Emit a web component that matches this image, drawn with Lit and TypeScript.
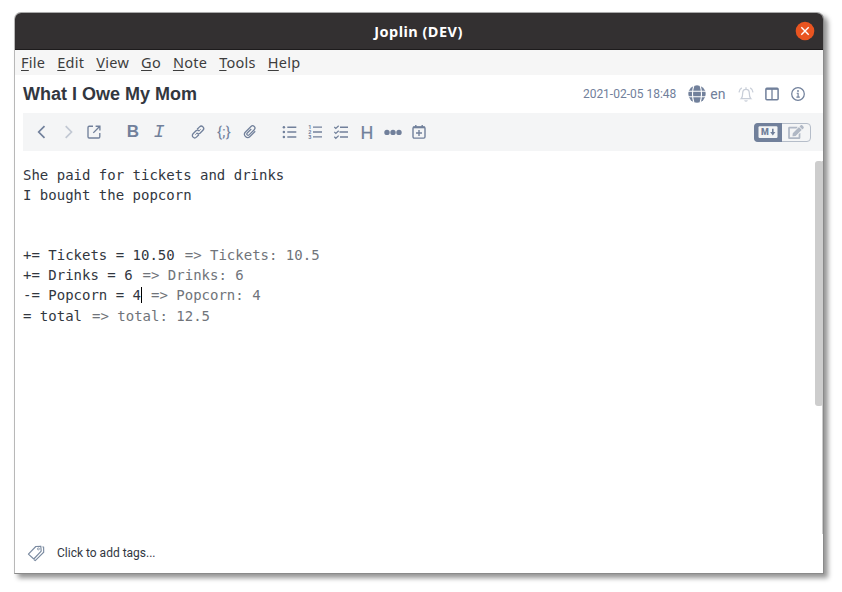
import { LitElement, html, svg, css } from "lit";
import { customElement } from "lit/decorators.js";

const icon = (w: number, h: number, body: unknown) =>
  html`<svg width=${w} height=${h} viewBox="0 0 ${w} ${h}" fill="none" stroke="currentColor" stroke-width="1.5">${body}</svg>`;

const icons = {
  close: icon(18, 18, svg`<circle cx="9" cy="9" r="9.3" fill="#e95420" stroke="none"/><path d="M5.3 5.3l7.4 7.4M12.7 5.3l-7.4 7.4" stroke="#fff" stroke-width="1.4"/>`),
  globe: icon(18, 18, svg`<circle cx="9" cy="9" r="8.7" fill="currentColor" stroke="none"/><path d="M0 6.3h18M0 11.7h18M6 0q-3 9 0 18M12 0q3 9 0 18" stroke="#fff" stroke-width="1.1"/>`),
  bell: icon(16, 16, svg`<path d="M3.2 12.6c1.1-1 1.5-2.5 1.5-5.5 0-2.2 1.2-3.8 3.3-3.8s3.3 1.6 3.3 3.8c0 3 .4 4.5 1.5 5.5zM8 1.2v2M6.6 14.3q1.4 1.7 2.8 0M3.8 1.9Q1.3 3.3 1 6.4M12.2 1.9q2.5 1.4 2.8 4.5" stroke-width="1.25"/>`),
  columns: icon(14, 14, svg`<rect x=".9" y="1.3" width="12.2" height="11.4" rx="1"/><path d="M1 1.9h12" stroke-width="1.9"/><path d="M7 2v10.5" stroke-width="1.3"/>`),
  info: icon(14, 14, svg`<circle cx="7" cy="7" r="6.3" stroke-width="1.25"/><path d="M5.7 6.2H7.1V10M5.4 10.1h3.4" stroke-width="1.15"/><circle cx="7" cy="4" r=".9" fill="currentColor" stroke="none"/>`),
  back: icon(14, 14, svg`<path d="M9.5 1.2L3.7 7l5.8 5.8" stroke-width="1.7"/>`),
  forward: icon(14, 14, svg`<path d="M4.7 1.2L10.5 7l-5.8 5.8" stroke-width="1.7"/>`),
  external: icon(14, 14, svg`<path d="M6 1.2H2.2Q1 1.2 1 2.4v9.4Q1 13 2.2 13h9.4q1.2 0 1.2-1.2V8M8.6 1.2h4.3v4.3M12.8 1.3L6.3 7.9" stroke-width="1.35"/>`),
  link: icon(14, 14, svg`<g transform="rotate(-45 7 7)" stroke-width="1.3"><path d="M5.7 9.5H2.3a2.4 2.4 0 0 1 0-4.8h4.2a2.3 2.3 0 0 1 2.2 2.7M8.3 4.5h3.4a2.4 2.4 0 0 1 0 4.8H7.5a2.3 2.3 0 0 1-2.2-2.7"/><path d="M3 7.1h3M8 6.9h3" stroke-width=".8"/></g>`),
  clip: icon(14, 14, svg`<g transform="rotate(45 7 7)" stroke-width="1.25"><path d="M10.2 2.8v7.4a3.2 3.2 0 0 1-6.4 0V2.4a2.3 2.3 0 0 1 4.6 0v7.3a1.3 1.3 0 0 1-2.6 0V4"/></g>`),
  bullets: icon(14, 14, svg`<g fill="currentColor" stroke="none"><circle cx="1.9" cy="2.2" r="1.25"/><circle cx="1.9" cy="7" r="1.25"/><circle cx="1.9" cy="11.9" r="1.25"/></g><path d="M5.3 2.2h9M5.3 7h9M5.3 11.9h9"/>`),
  numbers: icon(14, 14, svg`<path d="M5 2.2h9M5 7h9M5 11.9h9" stroke-width="1.3"/><g fill="currentColor" stroke="none" font-family="Roboto, sans-serif" font-weight="700" font-size="5.5"><text x=".2" y="4">1</text><text x=".2" y="9">2</text><text x=".2" y="14">3</text></g>`),
  checks: icon(14, 14, svg`<path d="M6 2.2h8M5.5 7H14M6 11.9h8"/><path d="M.3 2l1.5 1.5L4.7.8M.3 6.9l1.5 1.5 2.9-2.7M.3 11.8l1.5 1.5 2.9-2.7" stroke-width="1.25"/>`),
  dots: icon(18, 14, svg`<g fill="currentColor" stroke="none"><circle cx="3" cy="7.4" r="2.7"/><circle cx="9" cy="7.4" r="2.7"/><circle cx="15" cy="7.4" r="2.7"/></g>`),
  calendar: icon(14, 14, svg`<rect x="1" y="1.9" width="12" height="11.2" rx="1.3" stroke-width="1.4"/><path d="M1 2.4h12" stroke-width="1.8"/><path d="M3.8 0v2.5M10.2 0v2.5M7 5v6M4 8h6" stroke-width="1.4"/>`),
  tags: icon(18, 18, svg`<path d="M1.4 10.1L8.8 2.5l5-.3.4 4.9L6.8 15z" stroke-width="1.15" stroke-linejoin="round"/><path d="M15.5 2.8l1.1.3.1 5.1-8.4 8.4-1.3-.8" stroke-width="1.15"/><circle cx="11.4" cy="4.9" r="1" stroke-width=".8"/>`),
  markdown: icon(20, 12, svg`<rect x=".5" y=".2" width="19" height="11.8" rx="1.2" fill="#f4f5f6" stroke="none"/><text x="2.9" y="9" font-family="Roboto, sans-serif" font-weight="900" font-size="8.2" textLength="7.8" lengthAdjust="spacingAndGlyphs" fill="currentColor" stroke="none">M</text><path d="M14.8 2.8v4" stroke-width="1.6"/><path d="M12.2 6.1h5.2l-2.6 3.3z" fill="currentColor" stroke="none"/>`),
};

const editIcon = html`<svg width="16" height="14" viewBox="0 0 576 512" fill="currentColor"><path d="M402.6 83.2l90.2 90.2c3.8 3.8 3.8 10 0 13.8L274.4 405.6l-92.8 10.3c-12.4 1.4-22.9-9.1-21.5-21.5l10.3-92.8L388.8 83.2c3.8-3.8 10-3.8 13.8 0zm162-22.9l-48.8-48.8c-15.2-15.2-39.9-15.2-55.2 0l-35.4 35.4c-3.8 3.8-3.8 10 0 13.8l90.2 90.2c3.8 3.8 10 3.8 13.8 0l35.4-35.4c15.2-15.3 15.2-40 0-55.2zM384 346.2V448H64V128h229.8c3.2 0 6.2-1.3 8.5-3.5l40-40c7.6-7.6 2.2-20.5-8.5-20.5H48C21.5 64 0 85.5 0 112v352c0 26.5 21.5 48 48 48h352c26.5 0 48-21.5 48-48V306.2c0-10.7-12.9-16-20.5-8.5l-40 40c-2.2 2.3-3.5 5.3-3.5 8.5z"/></svg>`;

const menu = ["File", "Edit", "View", "Go", "Note", "Tools", "Help"];

const toolGroups = [
  [icons.back, html`<span class="dim">${icons.forward}</span>`, icons.external],
  [html`<b class="bold">B</b>`, html`<i class="italic">I</i>`],
  [icons.link, html`<span class="code">{;}</span>`, icons.clip],
  [icons.bullets, icons.numbers, icons.checks, html`<span class="heading">H</span>`, icons.dots, icons.calendar],
];

const lines: { text: string; result?: string; caret?: boolean }[] = [
  { text: "She paid for tickets and drinks" },
  { text: "I bought the popcorn" },
  { text: "" },
  { text: "" },
  { text: "+= Tickets = 10.50", result: "=> Tickets: 10.5" },
  { text: "+= Drinks = 6", result: "=> Drinks: 6" },
  { text: "-= Popcorn = 4", result: "=> Popcorn: 4", caret: true },
  { text: "= total", result: "=> total: 12.5" },
];

@customElement("app-root")
export class AppRoot extends LitElement {
  static styles = css`
    :host { display: block; box-sizing: border-box; width: 842px; height: 592px; padding: 12px 18px 18px 14px; background: #fff; overflow: hidden; }
    * { box-sizing: border-box; }
    svg { display: block; flex: none; overflow: visible; }
    .window { height: 562px; display: flex; flex-direction: column; border: 1px solid #8a8a8a; border-left-color: #b8b8b8; border-top-color: #aaa; border-radius: 7px 7px 0 0; background: #fff; box-shadow: 4px 4px 5px rgba(0,0,0,.42); }
    .titlebar { height: 37px; flex: none; display: grid; grid-template-columns: 1fr auto 1fr; align-items: center; background: #333031; border-bottom: 1px solid #1d1b1c; border-radius: 6px 6px 0 0; color: #fff; font: 700 14.5px "Noto Sans", sans-serif; padding-right: 9px; }
    .caption { grid-column: 2; letter-spacing: .48px; padding-left: 8px; }
    .close { justify-self: end; }
    .menu { height: 25px; flex: none; display: flex; align-items: center; gap: 12px; padding: 0 6px 2px; background: #f6f6f6; color: #3d3d3d; font: 14.5px "Noto Sans", sans-serif; letter-spacing: .26px; }
    .menu u { text-underline-offset: 2px; text-decoration-thickness: 1px; }
    .header { height: 38px; flex: none; display: flex; align-items: center; padding: 0 18px 0 8px; font-family: Roboto, sans-serif; }
    .header, .toolbar { color: #71809b; }
    .name { flex: 1; color: #32373f; font: 700 18px "Liberation Sans", sans-serif; }
    .date { font-size: 12px; }
    .lang { display: flex; align-items: center; gap: 5px; margin: 0 11px 0 12px; font-size: 14px; }
    .lang span { margin: 0 1px 0 -1px; }
    .actions { display: flex; align-items: center; gap: 12px; }
    .actions .dim { margin: 0 -.5px 0 0; }
    .dim { opacity: .38; }
    .toolbar { height: 38px; flex: none; display: flex; align-items: center; gap: 13px; margin-left: 8px; padding: 0 12px 0 6px; background: #f4f5f6; }
    .group { display: flex; }
    .tool { width: 26px; height: 26px; display: flex; align-items: center; justify-content: center; }
    .bold { font: 700 17px "Liberation Sans", sans-serif; }
    .italic { font: italic 18.5px "Liberation Mono", monospace; padding-top: 1px; }
    .code { font: 15px Roboto, sans-serif; letter-spacing: .2px; }
    .heading { font: 400 18px Roboto, sans-serif; -webkit-text-stroke: .2px currentColor; }
    .switch { margin-left: auto; width: 57px; height: 19px; display: flex; border: 1px solid #b5bdc9; border-radius: 4px; }
    .half { flex: 1; display: flex; align-items: center; justify-content: center; color: #b0b8c5; }
    .on { flex: none; width: 28px; margin: -1px 0 -1px -1px; background: #71809b; color: #71809b; border-radius: 4px 0 0 4px; }
    .body { flex: 1; display: flex; padding-top: 10px; }
    .editor { flex: 1; padding: 3.8px 0 0 8px; color: #32373f; font: 14px/20.1px "DejaVu Sans Mono", monospace; }
    .line { height: 20.1px; display: flex; white-space: pre; }
    .line:last-child { margin-top: .9px; }
    .result { margin-left: 10px; color: #70747a; }
    .caret { width: 1px; height: 16px; margin: 2px -1px 0 0; background: #000; }
    .track { width: 8px; height: 373px; border-right: 1px solid #ccc; }
    .thumb { width: 8px; height: 245px; border-radius: 3px; background: #cdcdcd; }
    .tags { height: 40px; flex: none; display: flex; align-items: center; gap: 12px; padding: 0 0 2px 12px; color: #32373f; font: 12px Roboto, sans-serif; }
    .tagicon { color: #7a8aa0; }
  `;

  render() {
    return html`<div class="window">
      <div class="titlebar"><span class="caption">Joplin (DEV)</span><span class="close">${icons.close}</span></div>
      <div class="menu">${menu.map((m) => html`<span><u>${m[0]}</u>${m.slice(1)}</span>`)}</div>
      <div class="header">
        <span class="name">What I Owe My Mom</span><span class="date">2021-02-05 18:48</span>
        <span class="lang">${icons.globe}<span>en</span></span>
        <span class="actions"><span class="dim">${icons.bell}</span>${icons.columns}${icons.info}</span>
      </div>
      <div class="toolbar">
        ${toolGroups.map((g) => html`<div class="group">${g.map((t) => html`<span class="tool">${t}</span>`)}</div>`)}
        <div class="switch"><span class="half on">${icons.markdown}</span><span class="half">${editIcon}</span></div>
      </div>
      <div class="body">
        <div class="editor">${lines.map((l) => html`<div class="line"><span>${l.text}</span>${l.caret ? html`<span class="caret"></span>` : ""}${l.result ? html`<span class="result">${l.result}</span>` : ""}</div>`)}</div>
        <div class="track"><div class="thumb"></div></div>
      </div>
      <div class="tags"><span class="tagicon">${icons.tags}</span><span>Click to add tags...</span></div>
    </div>`;
  }
}
